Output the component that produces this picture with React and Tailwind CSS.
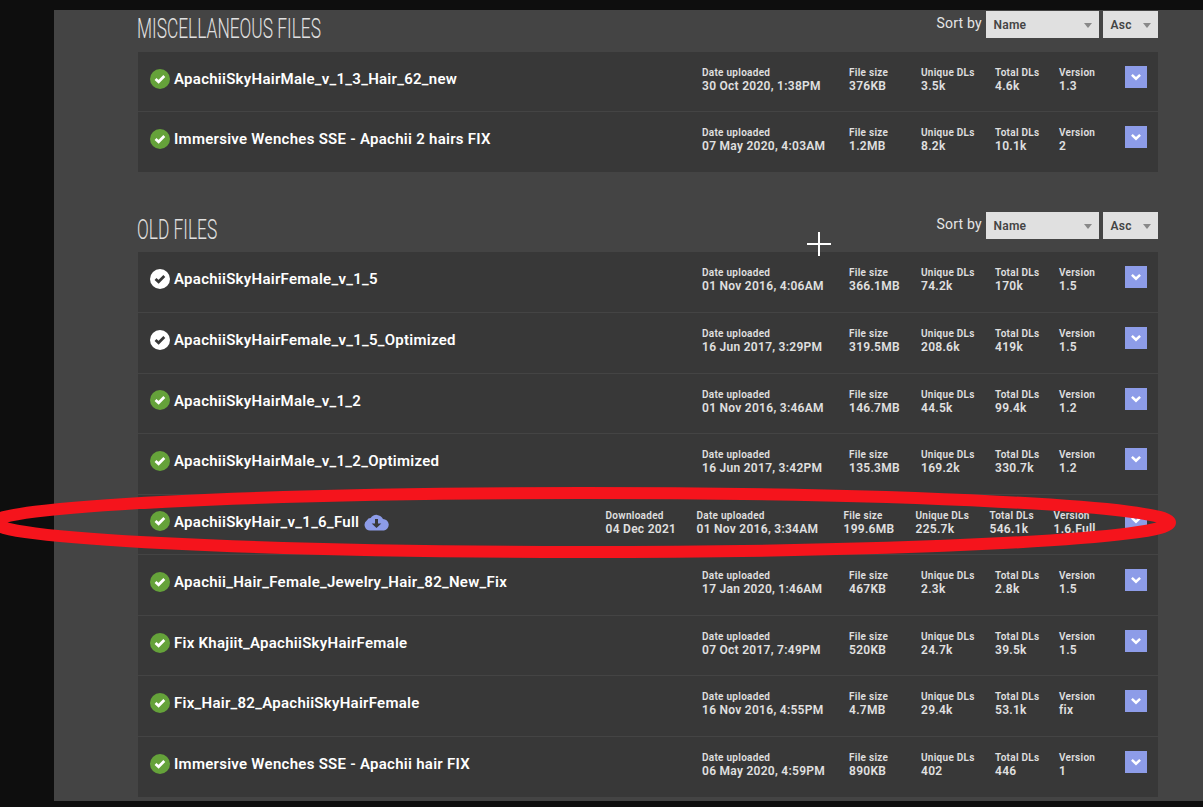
import clsx from 'clsx';

const miscFiles = [
  { name: 'ApachiiSkyHairMale_v_1_3_Hair_62_new', date: '30 Oct 2020, 1:38PM', size: '376KB', unique: '3.5k', total: '4.6k', version: '1.3' },
  { name: 'Immersive Wenches SSE - Apachii 2 hairs FIX', date: '07 May 2020, 4:03AM', size: '1.2MB', unique: '8.2k', total: '10.1k', version: '2' },
];

const oldFiles = [
  { name: 'ApachiiSkyHairFemale_v_1_5', date: '01 Nov 2016, 4:06AM', size: '366.1MB', unique: '74.2k', total: '170k', version: '1.5', unscanned: true, tall: true },
  { name: 'ApachiiSkyHairFemale_v_1_5_Optimized', date: '16 Jun 2017, 3:29PM', size: '319.5MB', unique: '208.6k', total: '419k', version: '1.5', unscanned: true, tall: true },
  { name: 'ApachiiSkyHairMale_v_1_2', date: '01 Nov 2016, 3:46AM', size: '146.7MB', unique: '44.5k', total: '99.4k', version: '1.2', raised: true },
  { name: 'ApachiiSkyHairMale_v_1_2_Optimized', date: '16 Jun 2017, 3:42PM', size: '135.3MB', unique: '169.2k', total: '330.7k', version: '1.2', tall: true },
  { name: 'ApachiiSkyHair_v_1_6_Full', downloaded: '04 Dec 2021', date: '01 Nov 2016, 3:34AM', size: '199.6MB', unique: '225.7k', total: '546.1k', version: '1.6.Full', raised: true },
  { name: 'Apachii_Hair_Female_Jewelry_Hair_82_New_Fix', date: '17 Jan 2020, 1:46AM', size: '467KB', unique: '2.3k', total: '2.8k', version: '1.5', tall: true },
  { name: 'Fix Khajiit_ApachiiSkyHairFemale', date: '07 Oct 2017, 7:49PM', size: '520KB', unique: '24.7k', total: '39.5k', version: '1.5' },
  { name: 'Fix_Hair_82_ApachiiSkyHairFemale', date: '16 Nov 2016, 4:55PM', size: '4.7MB', unique: '29.4k', total: '53.1k', version: 'fix', tall: true },
  { name: 'Immersive Wenches SSE - Apachii hair FIX', date: '06 May 2020, 4:59PM', size: '890KB', unique: '402', total: '446', version: '1' },
];

function StatusIcon({ unscanned, raised }) {
  return (
    <svg viewBox="0 0 20 20" className={clsx('h-5 w-5 shrink-0', raised && 'mb-[2px]')}>
      <circle cx="10" cy="10" r="10" className={unscanned ? 'fill-white' : 'fill-[#65a23a]'} />
      <path d="M5.500 9.900l3.100 2.900 5.700-5.800" fill="none" strokeWidth="2.7" className={unscanned ? 'stroke-[#383838]' : 'stroke-white'} />
    </svg>
  );
}

function CloudIcon() {
  return (
    <svg viewBox="0 0 25 17" className="ml-[5px] h-[17px] w-[25px] shrink-0">
      <path d="M6 16.500a5.600 5.600 0 0 1-3-10.200 4 4 0 0 1 3.600-2.400A7.200 7.200 0 0 1 19 5a5.800 5.800 0 0 1 1 11.500z" fill="#8d9ce8" />
      <path d="M11 5h3v4.500h3.300L12.500 14 7.700 9.500H11z" fill="#383838" />
    </svg>
  );
}

function Stat({ label, value, className }) {
  return (
    <div className={clsx('shrink-0 whitespace-nowrap text-[#e0e0e0]', className)}>
      <div className="text-[10px] leading-[13px] font-semibold tracking-[0.28px]">{label}</div>
      <div className="mt-px text-[12px] leading-[13px] font-semibold tracking-[0.28px]">{value}</div>
    </div>
  );
}

function FileRow({ file, last }) {
  return (
    <div
      className={clsx(
        'flex items-start bg-[#383838] pr-[11px] pl-3',
        file.tall ? 'h-[61px]' : 'h-[60px]',
        !last && 'border-b border-[#444444]',
      )}
    >
      <div className="mt-[17px] flex h-5 flex-1 items-center">
        <StatusIcon unscanned={file.unscanned} raised={file.raised} />
        <span className="ml-[4px] text-[15px] font-semibold tracking-[0.27px] whitespace-nowrap text-white">{file.name}</span>
        {file.downloaded && <CloudIcon />}
      </div>
      <div className="mt-[14px] flex">
        {file.downloaded && <Stat label="Downloaded" value={file.downloaded} className="w-[91px]" />}
        <Stat label="Date uploaded" value={file.date} className="w-[147px]" />
        <Stat label="File size" value={file.size} className="w-[72px]" />
        <Stat label="Unique DLs" value={file.unique} className="w-[74px]" />
        <Stat label="Total DLs" value={file.total} className="w-16" />
        <Stat label="Version" value={file.version} className={file.downloaded ? 'w-[71.5px]' : 'w-[66px]'} />
      </div>
      <button type="button" className="mt-[14px] flex h-[22px] w-[22px] items-center justify-center bg-[#8d9ce8]">
        <svg viewBox="0 0 22 22" className="h-[22px] w-[22px]">
          <path d="M6.900 8.900l4.100 3.800 4.100-3.800" fill="none" stroke="#fff" strokeWidth="2.500" />
        </svg>
      </button>
    </div>
  );
}

function Dropdown({ label, className }) {
  return (
    <button
      type="button"
      className={clsx('flex h-[27px] items-center justify-between bg-[#e0e0e0] pr-[7px] pl-[7.5px] text-[12px] font-semibold tracking-[0.25px] text-[#444444]', className)}
    >
      {label}
      <svg viewBox="0 0 8 5" className="mt-px h-[5px] w-2">
        <path d="M0 0h8L4 5z" fill="#888888" />
      </svg>
    </button>
  );
}

function SectionHeader({ title, titleClass, className }) {
  return (
    <div className={clsx('flex items-start justify-between', className)}>
      <h2 className={clsx('mt-px -ml-px origin-left text-[28px] leading-[34px] font-light whitespace-nowrap text-[#e0e0e0]', titleClass)}>{title}</h2>
      <div className="flex">
        <span className="mr-1 text-[14px] leading-[25px] tracking-[0.25px] text-[#e6e6e6]">Sort by</span>
        <Dropdown label="Name" className="mr-1 w-[113px]" />
        <Dropdown label="Asc" className="w-[55px]" />
      </div>
    </div>
  );
}

function FileList({ files }) {
  return (
    <div>
      {files.map((file, i) => (
        <FileRow key={file.name} file={file} last={i === files.length - 1} />
      ))}
    </div>
  );
}

export default function App() {
  return (
    <div className="relative h-[807px] w-[1203px] overflow-hidden bg-[#0e0e0e] pt-[10px] pl-[54px] font-[Roboto,sans-serif]">
      <main className="h-[791px] bg-[#444444] pr-[45px] pl-[84px]">
        <SectionHeader title="MISCELLANEOUS FILES" titleClass="scale-x-[0.62]" className="h-[42px] pt-px" />
        <FileList files={miscFiles} />
        <SectionHeader title="OLD FILES" titleClass="scale-x-[0.62]" className="mt-10 h-10" />
        <FileList files={oldFiles} />
      </main>

      {/* crosshair cursor */}
      <svg viewBox="0 0 24 24" className="absolute top-[232px] left-[807px] h-6 w-6">
        <path d="M11 0h2v24h-2zM0 11h24v2H0z" fill="#fff" />
      </svg>

      {/* hand-drawn marker around the 1.6 full file */}
      <svg viewBox="0 0 1203 807" className="pointer-events-none absolute inset-0 h-[807px] w-[1203px]">
        <ellipse cx="582" cy="522.500" rx="588" ry="29.500" fill="none" stroke="#f5141c" strokeWidth="12" />
      </svg>
    </div>
  );
}
